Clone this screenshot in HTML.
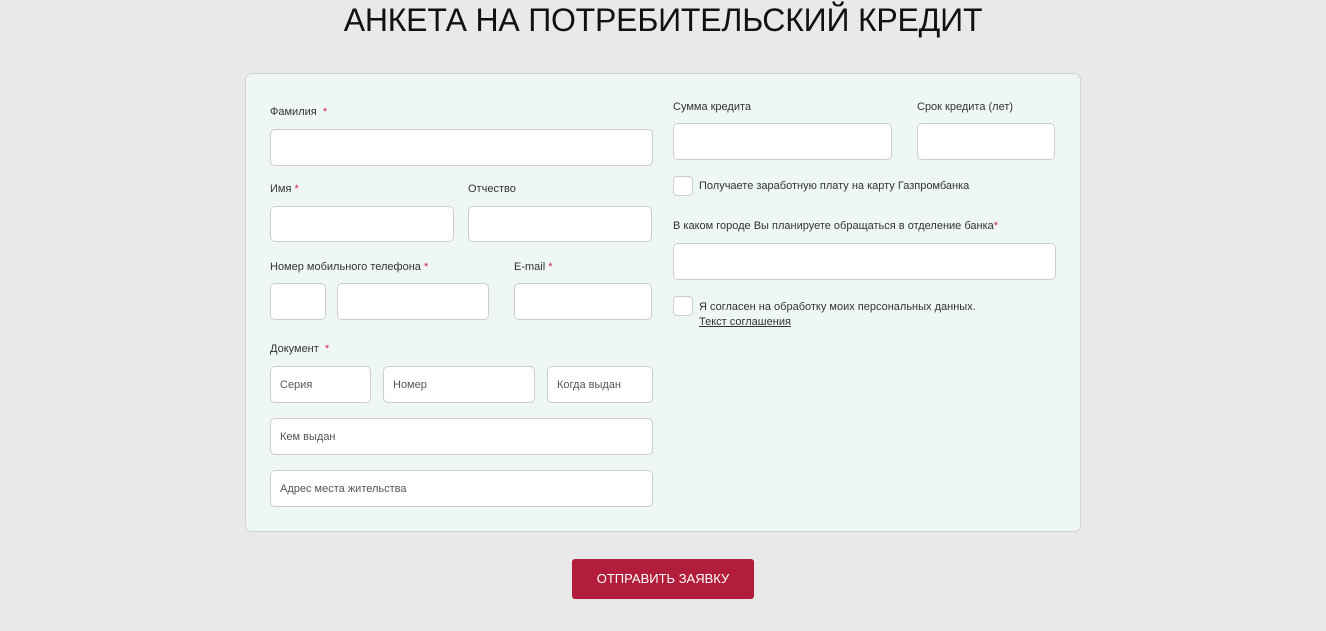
<!DOCTYPE html>
<html><head><meta charset="utf-8"><style>
*{box-sizing:border-box;margin:0;padding:0}
body{width:1326px;height:631px;background:#e9e9e9;font-family:"Liberation Sans",Arial,sans-serif;position:relative;overflow:hidden;color:#333}
h1{position:absolute;top:2px;left:0;width:1326px;text-align:center;font-weight:normal;font-size:32px;letter-spacing:-0.2px;color:#111;line-height:36px}
.card{position:absolute;left:245px;top:73px;width:836px;height:459px;background:#eff7f6;border:1px solid #d3d3d3;border-radius:7px}
.i{position:absolute;background:#fff;border:1px solid #cdcdcd;border-radius:5px;font-size:11px;color:#555;padding-left:9px;display:flex;align-items:center}
.l{position:absolute;font-size:11px;color:#333;margin-top:1px}
.s{color:#d0225b}
.cb{position:absolute;width:20px;height:20px;background:#fff;border:1px solid #cdcdcd;border-radius:4px}
.btn{position:absolute;left:572px;top:559px;width:182px;height:40px;background:#b21d3b;border-radius:3px;color:#fff;font-size:13px;text-align:center;line-height:40px}
</style></head><body>
<h1>АНКЕТА НА ПОТРЕБИТЕЛЬСКИЙ КРЕДИТ</h1>
<div class="card"></div>
<div class="l" style="left:270px;top:105px">Фамилия&nbsp; <span class="s">*</span></div>
<div class="i" style="left:270px;top:129px;width:383px;height:37px"></div>
<div class="l" style="left:270px;top:182px">Имя <span class="s">*</span></div>
<div class="l" style="left:468px;top:182px">Отчество</div>
<div class="i" style="left:270px;top:206px;width:184px;height:36px"></div>
<div class="i" style="left:468px;top:206px;width:184px;height:36px"></div>
<div class="l" style="left:270px;top:260px">Номер мобильного телефона <span class="s">*</span></div>
<div class="l" style="left:514px;top:260px">E-mail <span class="s">*</span></div>
<div class="i" style="left:270px;top:283px;width:56px;height:37px"></div>
<div class="i" style="left:337px;top:283px;width:152px;height:37px"></div>
<div class="i" style="left:514px;top:283px;width:138px;height:37px"></div>
<div class="l" style="left:270px;top:342px">Документ&nbsp; <span class="s">*</span></div>
<div class="i" style="left:270px;top:366px;width:101px;height:37px">Серия</div>
<div class="i" style="left:383px;top:366px;width:152px;height:37px">Номер</div>
<div class="i" style="left:547px;top:366px;width:106px;height:37px">Когда выдан</div>
<div class="i" style="left:270px;top:418px;width:383px;height:37px">Кем выдан</div>
<div class="i" style="left:270px;top:470px;width:383px;height:37px">Адрес места жительства</div>
<div class="l" style="left:673px;top:100px">Сумма кредита</div>
<div class="l" style="left:917px;top:100px">Срок кредита (лет)</div>
<div class="i" style="left:673px;top:123px;width:219px;height:37px"></div>
<div class="i" style="left:917px;top:123px;width:138px;height:37px"></div>
<div class="cb" style="left:673px;top:176px"></div>
<div class="l" style="left:699px;top:179px">Получаете заработную плату на карту Газпромбанка</div>
<div class="l" style="left:673px;top:219px">В каком городе Вы планируете обращаться в отделение банка<span class="s">*</span></div>
<div class="i" style="left:673px;top:243px;width:383px;height:37px"></div>
<div class="cb" style="left:673px;top:296px"></div>
<div class="l" style="left:699px;top:299px;line-height:15px">Я согласен на обработку моих персональных данных.<br><span style="text-decoration:underline">Текст соглашения</span></div>
<div class="btn">ОТПРАВИТЬ ЗАЯВКУ</div>
</body></html>
